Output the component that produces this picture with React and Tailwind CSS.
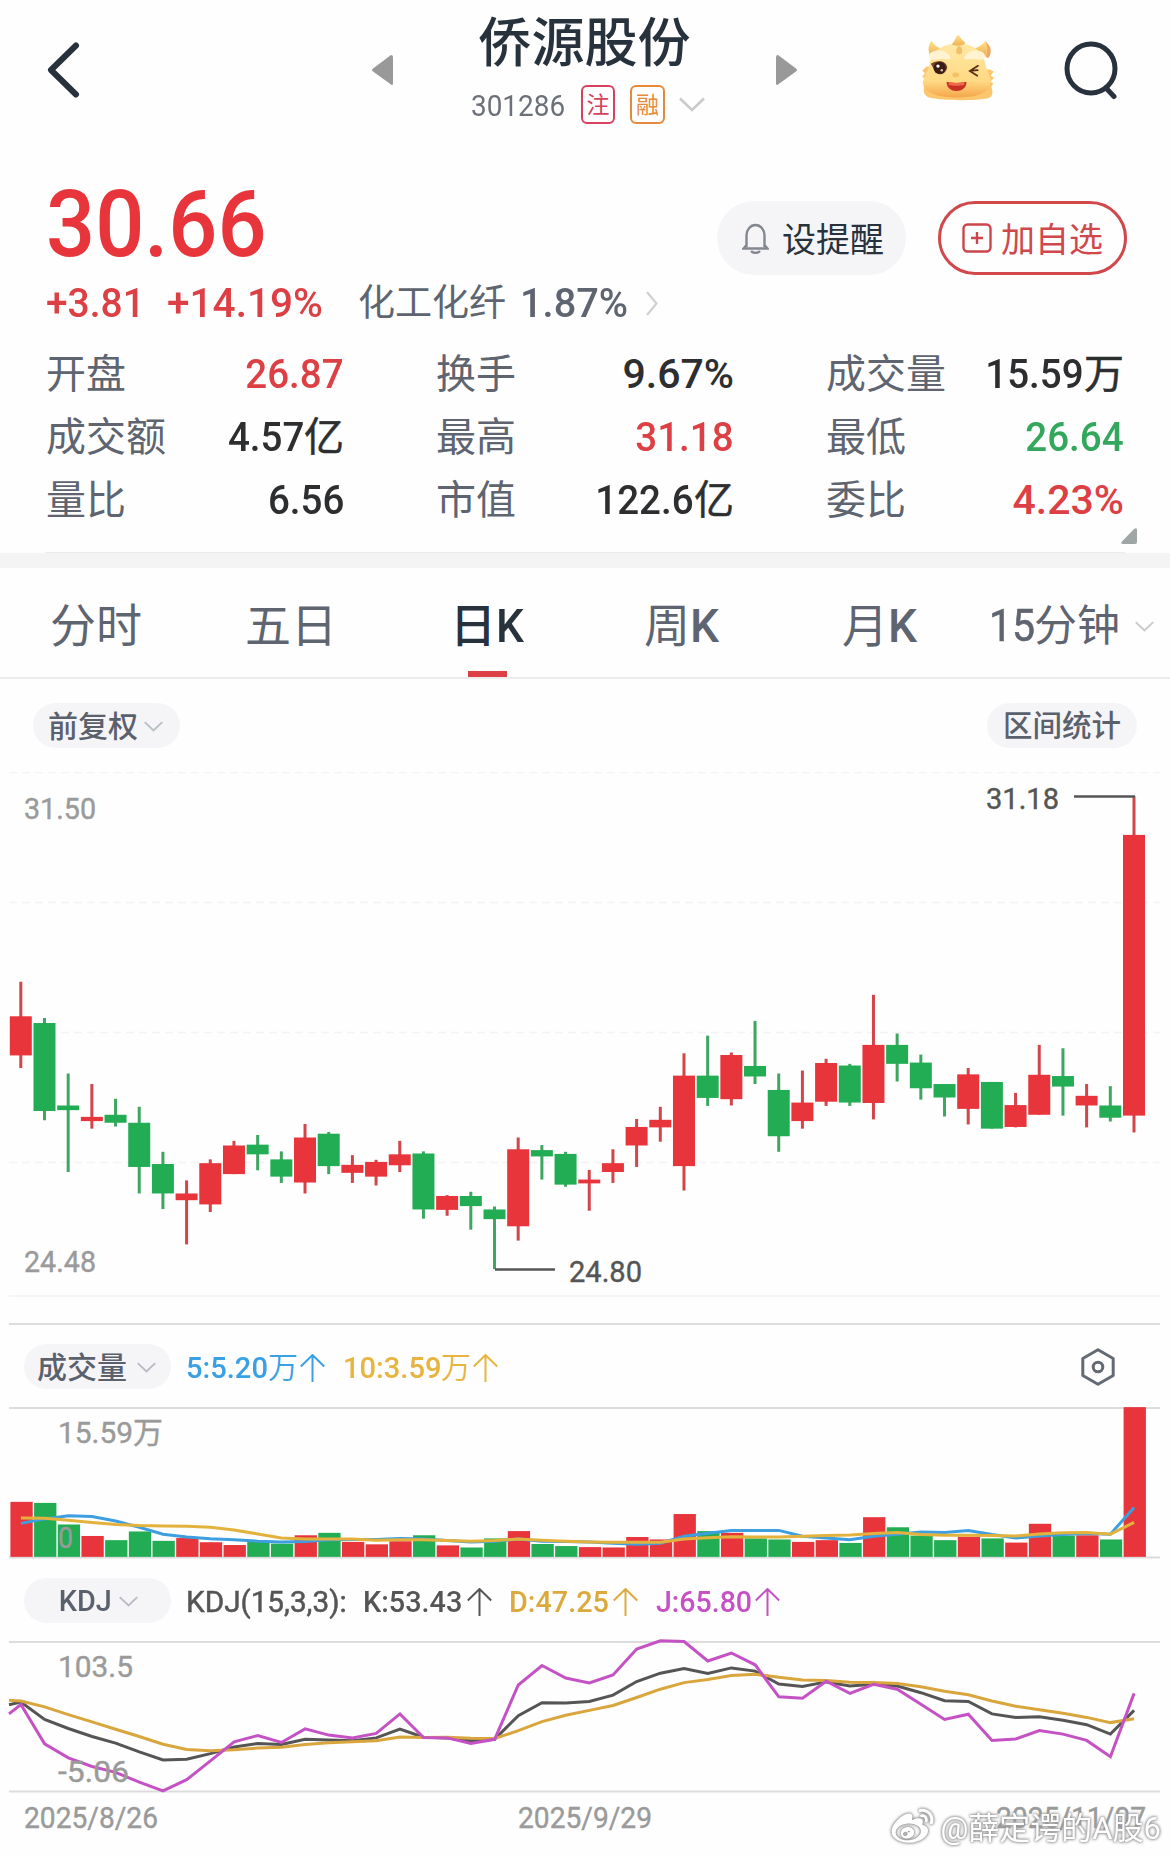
import { FaWeibo } from 'react-icons/fa';
import clsx from 'clsx';

const RED = '#e8353b';
const GREEN = '#22ad54';
const STEP = 23.685;

const stats = [
  { label: '开盘', value: '26.87', color: 'text-[#dc4045]' },
  { label: '换手', value: '9.67%' },
  { label: '成交量', value: '15.59', unit: '万' },
  { label: '成交额', value: '4.57', unit: '亿' },
  { label: '最高', value: '31.18', color: 'text-[#dc4045]' },
  { label: '最低', value: '26.64', color: 'text-[#33a85c]' },
  { label: '量比', value: '6.56' },
  { label: '市值', value: '122.6', unit: '亿' },
  { label: '委比', value: '4.23%', color: 'text-[#dc4045]' },
];

// [up?, high, body top, body bottom, low]
const candles = [
  [1, 717, 799, 892, 922], [0, 803, 815, 1024, 1046], [0, 935, 1011, 1022, 1169], [1, 960, 1038, 1048, 1066],
  [0, 995, 1033, 1052, 1061], [0, 1014, 1052, 1157, 1220], [0, 1121, 1150, 1220, 1257], [1, 1189, 1220, 1236, 1341],
  [1, 1139, 1148, 1246, 1264], [1, 1095, 1106, 1174, 1174], [0, 1081, 1104, 1127, 1165], [0, 1120, 1139, 1180, 1195],
  [1, 1055, 1087, 1194, 1220], [0, 1074, 1078, 1155, 1174], [1, 1129, 1152, 1171, 1195], [1, 1140, 1145, 1180, 1201],
  [1, 1095, 1127, 1153, 1169], [0, 1120, 1125, 1258, 1280], [1, 1224, 1226, 1259, 1273], [0, 1216, 1226, 1250, 1306],
  [0, 1251, 1258, 1281, 1400], [1, 1087, 1115, 1298, 1332], [0, 1105, 1117, 1132, 1187], [0, 1121, 1126, 1199, 1204],
  [1, 1164, 1187, 1196, 1261], [1, 1115, 1148, 1169, 1195], [1, 1043, 1062, 1106, 1157], [1, 1014, 1045, 1063, 1097],
  [1, 887, 940, 1155, 1213], [0, 845, 940, 993, 1012], [1, 885, 891, 996, 1011], [0, 810, 917, 942, 960],
  [0, 935, 974, 1084, 1121], [1, 928, 1004, 1048, 1066], [1, 900, 910, 1002, 1012], [0, 912, 916, 1004, 1012],
  [1, 748, 867, 1005, 1044], [0, 840, 867, 912, 954], [0, 890, 909, 970, 997], [0, 960, 960, 992, 1037],
  [1, 922, 937, 1019, 1056], [0, 955, 955, 1066, 1066], [1, 981, 1010, 1062, 1063], [1, 867, 938, 1033, 1033],
  [0, 875, 941, 966, 1035], [1, 960, 988, 1011, 1063], [0, 965, 1011, 1040, 1049], [1, 276, 368, 1035, 1075],
];

const volumes = [
  551, 554, 616, 649, 661, 636, 663, 655, 667, 675, 665, 671, 647, 640, 666, 673, 664, 647, 676, 682, 656, 635, 672, 678,
  681, 682, 652, 659, 586, 635, 640, 656, 659, 666, 661, 669, 595, 624, 648, 661, 651, 656, 668, 614, 648, 647, 659, 279,
];
const ma5 = [
  613, 600, 591, 593, 606, 624, 644, 652, 657, 660, 664, 666, 665, 660, 659, 659, 656, 658, 662, 666, 664, 658, 664, 665,
  666, 670, 673, 670, 650, 641, 633, 633, 633, 650, 655, 660, 650, 644, 638, 639, 633, 645, 655, 649, 645, 642, 644, 567,
];
const ma10 = [
  597, 598, 604, 610, 616, 619, 620, 621, 624, 632, 643, 655, 658, 658, 658, 661, 660, 660, 662, 664, 662, 658, 661, 664,
  666, 667, 667, 667, 658, 654, 651, 652, 652, 650, 648, 646, 642, 639, 645, 647, 647, 648, 649, 643, 640, 639, 644, 610,
];
const kLine = [
  1126, 1176, 1202, 1225, 1244, 1269, 1292, 1290, 1274, 1255, 1245, 1248, 1233, 1235, 1237, 1229, 1204, 1227, 1229, 1237,
  1233, 1165, 1128, 1129, 1124, 1106, 1067, 1043, 1030, 1044, 1028, 1037, 1074, 1081, 1068, 1080, 1075, 1080, 1099, 1122,
  1124, 1160, 1170, 1168, 1178, 1191, 1218, 1150,
];
const dLine = [
  1123, 1140, 1162, 1183, 1204, 1225, 1247, 1262, 1266, 1263, 1258, 1256, 1248, 1243, 1240, 1237, 1226, 1228, 1227, 1230,
  1231, 1208, 1182, 1164, 1150, 1136, 1113, 1089, 1070, 1061, 1050, 1046, 1055, 1063, 1064, 1069, 1070, 1073, 1082, 1095,
  1105, 1123, 1138, 1148, 1158, 1170, 1185, 1174,
];
const jLine = [
  1133, 1246, 1286, 1311, 1328, 1356, 1381, 1349, 1295, 1240, 1222, 1242, 1203, 1221, 1229, 1216, 1160, 1228, 1229, 1245,
  1233, 1077, 1021, 1057, 1071, 1048, 974, 950, 952, 1008, 985, 1019, 1111, 1115, 1066, 1101, 1075, 1089, 1132, 1176,
  1161, 1236, 1232, 1208, 1218, 1236, 1283, 1101,
];

const priceY = (v) => 680 + v / 2.376;
const indY = (v) => 1310 + v / 2.872;
const toPoints = (data, lead) => {
  const pts = data.map((v, i) => `${(20.9 + i * STEP).toFixed(1)},${indY(v).toFixed(1)}`);
  if (lead) pts.unshift(`9,${indY(lead).toFixed(1)}`);
  return pts.join(' ');
};

function Chevron({ className, color = '#c9cacc' }) {
  return (
    <svg viewBox="0 0 26 15" className={className} fill="none" stroke={color} strokeWidth="2.6">
      <path d="M1 1.5 13 13 25 1.5" />
    </svg>
  );
}

function UpArrow({ className }) {
  return (
    <svg viewBox="0 0 25 28" className={clsx('h-7 w-[25px]', className)} fill="none" stroke="currentColor" strokeWidth="2">
      <path d="M12.5 1v27M.8 12.5 12.5 1l11.7 11.5" />
    </svg>
  );
}

function Label({ x, y, w, color = '#9a9a9a', children }) {
  return (
    <text x={x} y={y} textLength={w} lengthAdjust="spacingAndGlyphs" fill={color} stroke={color} strokeWidth=".4" fontSize="30">
      {children}
    </text>
  );
}

function Mascot() {
  return (
    <svg viewBox="0 0 215 193" className="ml-[124px] h-[66px] w-[74px] -translate-y-[2px]">
      <defs>
        <linearGradient id="face" x1="0" y1="0" x2="0" y2="1">
          <stop offset="0" stopColor="#ffe9a6" />
          <stop offset=".7" stopColor="#ffd983" />
          <stop offset="1" stopColor="#f5a54a" />
        </linearGradient>
        <linearGradient id="horn" x1="0" y1="0" x2="0" y2="1">
          <stop offset="0" stopColor="#ffe28e" />
          <stop offset="1" stopColor="#eeb052" />
        </linearGradient>
      </defs>
      <path d="M16 92 3 104l8 8-8 9 7 8-6 10 7 8c-8 16-3 30 12 36 48 10 130 10 172 2 14-4 16-16 10-34l6-10-9-4 11-12-10-6 9-12-12-6z" fill="#fbc66e" />
      <path d="M27 62C17 42 22 24 31 17c6 12 16 20 34 24zM186 62c12-20 8-36 1-45-7 12-18 18-36 24z" fill="url(#horn)" />
      <path d="M187 18c8 14 8 30 0 44l9 6c12-16 10-36-9-50z" fill="#f0a865" />
      <path d="M106 25c46 0 76 24 82 62 4 22 18 34 14 58-5 28-48 38-98 38S8 170 6 145c-2-22 14-36 18-58 6-38 36-62 82-62z" fill="url(#face)" />
      <path d="M90 27c4-8 8-8 12-21 3-7 9-7 12 0 4 10 14 10 14 19-4 8-34 8-38 2z" fill="url(#horn)" />
      <path d="M102 50c0-24 18-24 18 0 0 8-18 8-18 0z" fill="#eec06a" />
      <path d="M22 66c0-26 42-24 54-12 14 10 12 20-4 17-18-4-42 8-50-5zM187 66c0-26-40-24-52-12-14 10-12 20 4 17 18-4 42 8 48-5z" fill="#fff3d2" />
      <path d="M28 84c8-4 16-8 26-7 12 0 20 8 22 17-4 26-34 28-40 4z" fill="#7a4528" />
      <circle cx="54" cy="96" r="18" fill="#3b1d14" />
      <circle cx="49" cy="91" r="5" fill="#fff" />
      <circle cx="60" cy="103" r="3.5" fill="#e8c8a6" />
      <path d="m166 90-24 15 22 14M144 105l21-2" fill="none" stroke="#5a2c14" strokeWidth="5" strokeLinecap="round" />
      <ellipse cx="101" cy="117" rx="10" ry="7" fill="#f3c064" />
      <path d="M74 137c16 4 42 4 58 0 3 34-58 38-58 0z" fill="#c53022" />
      <path d="M80 138c14 3 30 3 46 0v8c-12 3-34 3-46 0z" fill="#ef6a4a" />
    </svg>
  );
}

function Header() {
  return (
    <header className="flex h-[140px] items-center pl-[44px]">
      <svg viewBox="0 0 40 60" className="h-[60px] w-10" fill="none" stroke="#28323d" strokeWidth="6" strokeLinecap="round" strokeLinejoin="round">
        <path d="M32 5.500 7 30l25 24.500" />
      </svg>
      <svg viewBox="0 0 21 30" className="ml-[288px] h-[30px] w-[21px]">
        <path d="M19 0q2 0 2 2v26q0 3-2 1.500L1 16.500q-2-1.500 0-3z" fill="#999" />
      </svg>
      <div className="flex w-[383px] flex-col gap-[14px]">
        <h1 className="pt-[2px] text-center text-[53px] leading-[53px] font-medium text-[#28323d]">侨源股份</h1>
        <div className="flex items-center pl-[78px]">
          <span className="w-[111px] origin-left scale-x-[.93] pt-[3px] text-[30px] leading-none text-[#6b7079]">301286</span>
          <span className="-ml-px flex h-[39px] w-[34px] items-center justify-center rounded-[6px] border-2 border-[#d8405f] pt-[2px] text-[23px] leading-none text-[#d8405f]">注</span>
          <span className="ml-[15px] flex h-[39px] w-[35px] items-center justify-center rounded-[6px] border-2 border-[#e5893a] pt-[2px] text-[23px] leading-none text-[#e5893a]">融</span>
          <Chevron className="ml-[14px] h-[15px] w-[26px]" />
        </div>
      </div>
      <svg viewBox="0 0 21 30" className="h-[30px] w-[21px]">
        <path d="M2 0Q0 0 0 2v26q0 3 2 1.500l18-13q2-1.500 0-3z" fill="#999" />
      </svg>
      <Mascot />
      <svg viewBox="0 0 58 60" className="ml-[68px] h-[60px] w-[58px]" fill="none" stroke="#28323d" strokeWidth="5" strokeLinecap="round">
        <ellipse cx="28" cy="28.500" rx="24" ry="24.500" />
        <path d="m43 48 8 8.500" />
      </svg>
    </header>
  );
}

function Quote() {
  return (
    <section className="relative flex h-[412px] flex-col pt-9 pr-[42px] pl-[46px]">
      <div className="flex h-[99px] items-start">
        <div className="w-[671px] origin-left scale-x-[.94] pt-[2px] text-[92px] leading-[94px] font-medium text-[#e8353b]">30.66</div>
        <button className="mt-[25px] flex h-[74px] w-[189px] items-center rounded-full bg-[#f5f5f8] pl-[25px]">
          <svg viewBox="0 0 27 31" className="h-[31px] w-[27px]" fill="none" stroke="#83878e" strokeWidth="2.4">
            <path d="M4.500 24V12.500a9 10.500 0 0 1 18 0V24M4.500 22 1.500 25.500h24l-3-3.500M9 28c2 2.500 7 2.500 9 0" />
          </svg>
          <span className="ml-[13px] pt-[4px] text-[34px] leading-none text-[#28323d]">设提醒</span>
        </button>
        <button className="mt-[25px] ml-[32px] flex h-[74px] w-[189px] items-center rounded-full border-[3px] border-[#d0484b] pl-[21px]">
          <svg viewBox="0 0 30 30" className="h-[30px] w-[30px]" fill="none" stroke="#c9474b" strokeWidth="2.4">
            <rect x="1.500" y="1.500" width="27" height="27" rx="4" />
            <path d="M15 9v12M9 15h12" />
          </svg>
          <span className="ml-[9px] pt-[4px] text-[34px] leading-none text-[#d0484b]">加自选</span>
        </button>
      </div>
      <div className="flex h-[54px] items-center pt-[2px] text-[41px] leading-none font-medium text-[#dc4045]">
        <span className="w-[121px] origin-left scale-x-[.95]">+3.81</span>
        <span className="w-[191px] origin-left scale-x-[.99]">+14.19%</span>
        <span className="w-[162px] text-[37px] font-normal text-[#5f6570]">化工化纤</span>
        <span className="w-[126px] origin-left scale-x-[.97] text-[#5f6570]">1.87%</span>
        <svg viewBox="0 0 12 25" className="h-[25px] w-3" fill="none" stroke="#d0d1d4" strokeWidth="2.2">
          <path d="m1 1 9.500 11.500L1 24" />
        </svg>
      </div>
      <dl className="mt-[14px] grid w-[1078px] grid-cols-[298px_298px_298px] gap-x-[92px]">
        {stats.map((s) => (
          <div key={s.label} className="flex h-[63px] items-center justify-between text-[40px] leading-none">
            <dt className="text-[#5f6570]">{s.label}</dt>
            <dd className={clsx('flex items-center font-medium', s.color || 'text-[#2d2e30]')}>
              <span className={clsx('origin-right text-[41px]', s.value.endsWith('%') ? 'scale-x-100' : 'scale-x-[.94]')}>{s.value}</span>
              {s.unit && <span className="font-normal [-webkit-text-stroke:0.5px]">{s.unit}</span>}
            </dd>
          </div>
        ))}
      </dl>
      <svg viewBox="0 0 16 16" className="absolute right-[33px] bottom-2 h-4 w-4">
        <path d="M13 1q3-2 3 1v12q0 2-2 2H2q-3 0-1-2.500z" fill="#a0a5a6" />
      </svg>
    </section>
  );
}

function Tabs() {
  return (
    <nav className="flex h-[111px] items-center border-b-2 border-[#ececec] pt-[7px] text-[46px] leading-none text-[#5f6570]">
      <span className="ml-[50px] w-[195px]">分时</span>
      <span className="w-[205px]">五日</span>
      <span className="relative flex h-full w-[194px] items-center font-medium text-[#28323d]">
        日<span className="origin-left scale-x-[.96]">K</span>
        <i className="absolute bottom-0 left-[18px] h-[6px] w-[39px] bg-[#dc4045]" />
      </span>
      <span className="flex w-[198px]">周<span className="origin-left font-medium">K</span></span>
      <span className="flex w-[147px]">月<span className="origin-left font-medium">K</span></span>
      <span className="flex w-[146px] items-center text-[43px]">
        <span className="w-[45px] origin-left scale-x-[.93] text-[44px] [-webkit-text-stroke:0.6px]">15</span>分钟
      </span>
      <Chevron className="h-[11px] w-[19px]" />
    </nav>
  );
}

function CandleChart() {
  return (
    <section>
      <div className="flex h-[93px] justify-between px-[33px] pt-6 text-[30px] leading-none font-medium text-[#5b616c]">
        <button className="flex h-[45px] w-[147px] items-center rounded-full bg-[#f5f5f8] pt-[2px] pl-[15px]">
          前复权<Chevron color="#b9c1c4" className="ml-[6px] h-[11px] w-[19px]" />
        </button>
        <button className="flex h-[45px] w-[150px] items-center justify-center rounded-full bg-[#f5f5f8] pt-[2px] text-[29.5px]">
          区间统计
        </button>
      </div>
      <svg viewBox="0 772 1170 554" className="block h-[554px] w-[1170px]">
        {[772.5, 902.5, 1032.5, 1162.500].map((y) => (
          <path key={y} d={`M9 ${y}H1160`} stroke="#f3f3f4" strokeWidth="1.500" strokeDasharray="8 5" />
        ))}
        <path d="M9 1296H1160" stroke="#f4f4f5" strokeWidth="2" />
        <path d="M9 1324H1160" stroke="#dddddd" strokeWidth="2" />
        {candles.map(([up, high, top, bottom, low], i) => {
          const x = 20.8 + i * STEP;
          return (
            <g key={i} fill={up ? RED : GREEN}>
              <rect x={x - 1.5} y={priceY(high)} width="3" height={(low - high) / 2.376} fill={up ? '#d2454a' : '#3fa662'} />
              <rect x={x - 11} y={priceY(top)} width="22" height={(bottom - top) / 2.376} />
            </g>
          );
        })}
        <path d="M1074 796.500h61M495 1269.500h60" stroke="#555" strokeWidth="2.500" />
        <Label x="24" y="819" w="72">31.50</Label>
        <Label x="24" y="1271.500" w="72">24.48</Label>
        <Label x="986" y="809" w="73" color="#555">31.18</Label>
        <Label x="569" y="1282" w="73" color="#555">24.80</Label>
      </svg>
    </section>
  );
}

function VolumeChart() {
  return (
    <section>
      <div className="flex h-[81px] items-center pl-6 text-[30px] leading-none">
        <button className="flex h-[45px] w-[147px] items-center rounded-full bg-[#f5f5f8] pt-[2px] pl-[13px] font-medium text-[#5b616c]">
          成交量<Chevron color="#b9bcc4" className="ml-[10px] h-[11px] w-[19px]" />
        </button>
        <span className="ml-[15px] flex w-[157px] items-center pt-[2px] text-[#3aa0e4]">
          <span className="w-[82px] origin-left scale-x-[.97] font-medium">5:5.20</span>
          <span className="w-[32px] font-[350]">万</span>
          <UpArrow />
        </span>
        <span className="flex items-center pt-[2px] text-[#e6b43f]">
          <span className="w-[98px] origin-left scale-x-[.97] font-medium">10:3.59</span>
          <span className="w-[32px] font-[350]">万</span>
          <UpArrow />
        </span>
        <svg viewBox="0 0 34 38" className="ml-[583px] h-[38px] w-[34px]" fill="none" stroke="#646a74" strokeWidth="3" strokeLinejoin="round">
          <path d="m17 1.800 15.200 8.700v17L17 36.200 1.800 27.500v-17z" />
          <circle cx="17" cy="19" r="4.800" />
        </svg>
      </div>
      <svg viewBox="0 1407 1170 152" className="block h-[152px] w-[1170px]">
        <path d="M9 1408H1160M9 1557.500H1160" stroke="#dcdcdc" strokeWidth="2" />
        {volumes.map((v, i) => (
          <rect key={i} x={10.400 + i * STEP} y={indY(v)} width="22.300" height={(709 - v) / 2.872} fill={candles[i][0] ? RED : GREEN} />
        ))}
        <g fill="none" strokeWidth="3">
          <polyline points={toPoints(ma5)} stroke="#3d9fe0" />
          <polyline points={toPoints(ma10)} stroke="#e3b23c" />
        </g>
        <Label x="58" y="1443" w="105">15.59万</Label>
        <Label x="58" y="1548" w="15">0</Label>
      </svg>
    </section>
  );
}

function KdjChart() {
  return (
    <section>
      <div className="flex h-[82px] items-center pl-6 text-[30px] leading-none">
        <button className="flex h-[45px] w-[147px] items-center rounded-full bg-[#f5f5f8] pt-[2px] pl-[30px] font-medium text-[#5b616c]">
          <span className="w-[65px] origin-left scale-x-[.96]">KDJ</span>
          <Chevron color="#b9bcc4" className="h-[11px] w-[19px]" />
        </button>
        <span className="ml-[15px] w-[177px] origin-left scale-x-[.99] pt-[3px] text-[#555] [-webkit-text-stroke:0.5px]">KDJ(15,3,3):</span>
        <span className="flex w-[146px] items-center pt-[3px] text-[#555]">
          <span className="w-[104px] origin-left scale-x-[.96] font-medium">K:53.43</span>
          <UpArrow />
        </span>
        <span className="flex w-[147px] items-center pt-[3px] text-[#dca93c]">
          <span className="w-[104px] origin-left scale-x-[.96] font-medium">D:47.25</span>
          <UpArrow />
        </span>
        <span className="flex items-center pt-[3px] text-[#c552c4]">
          <span className="w-[99px] origin-left scale-x-[.95] font-medium">J:65.80</span>
          <UpArrow />
        </span>
      </div>
      <svg viewBox="0 1641 1170 152" className="block h-[152px] w-[1170px] overflow-visible">
        <path d="M9 1642H1160M9 1791.500H1160" stroke="#dcdcdc" strokeWidth="2" />
        <g fill="none" strokeWidth="3">
          <polyline points={toPoints(kLine, 1134)} stroke="#555" />
          <polyline points={toPoints(dLine, 1121)} stroke="#d9a63d" />
          <polyline points={toPoints(jLine, 1160)} stroke="#c552c4" />
        </g>
        <Label x="58" y="1677" w="75">103.5</Label>
        <Label x="58" y="1782" w="71">-5.06</Label>
      </svg>
      <svg viewBox="0 1793 1170 63" className="block h-[63px] w-[1170px]">
        <Label x="24" y="1828" w="134">2025/8/26</Label>
        <Label x="518" y="1828" w="134">2025/9/29</Label>
        <Label x="996" y="1828" w="150">2025/11/07</Label>
      </svg>
    </section>
  );
}

export default function App() {
  return (
    <main className="relative h-[1856px] w-[1170px] overflow-hidden bg-[#fefefe] [font-family:Roboto,'Noto_Sans_CJK_SC',sans-serif]">
      <Header />
      <Quote />
      <div className="mx-[45px] h-px bg-[#ebebeb]" />
      <div className="h-[15px] bg-[#f4f4f4]" />
      <Tabs />
      <CandleChart />
      <VolumeChart />
      <KdjChart />
      {/* weibo watermark */}
      <div className="absolute right-[9px] bottom-[8px] flex items-center text-[31px] leading-none text-white [filter:drop-shadow(0_0_1.5px_#888)_drop-shadow(0_0_1px_#aaa)]">
        <FaWeibo className="mr-[7px] h-[42px] w-[43px]" />
        <span className="pt-[3px]">@薛定谔的A股6</span>
      </div>
    </main>
  );
}
